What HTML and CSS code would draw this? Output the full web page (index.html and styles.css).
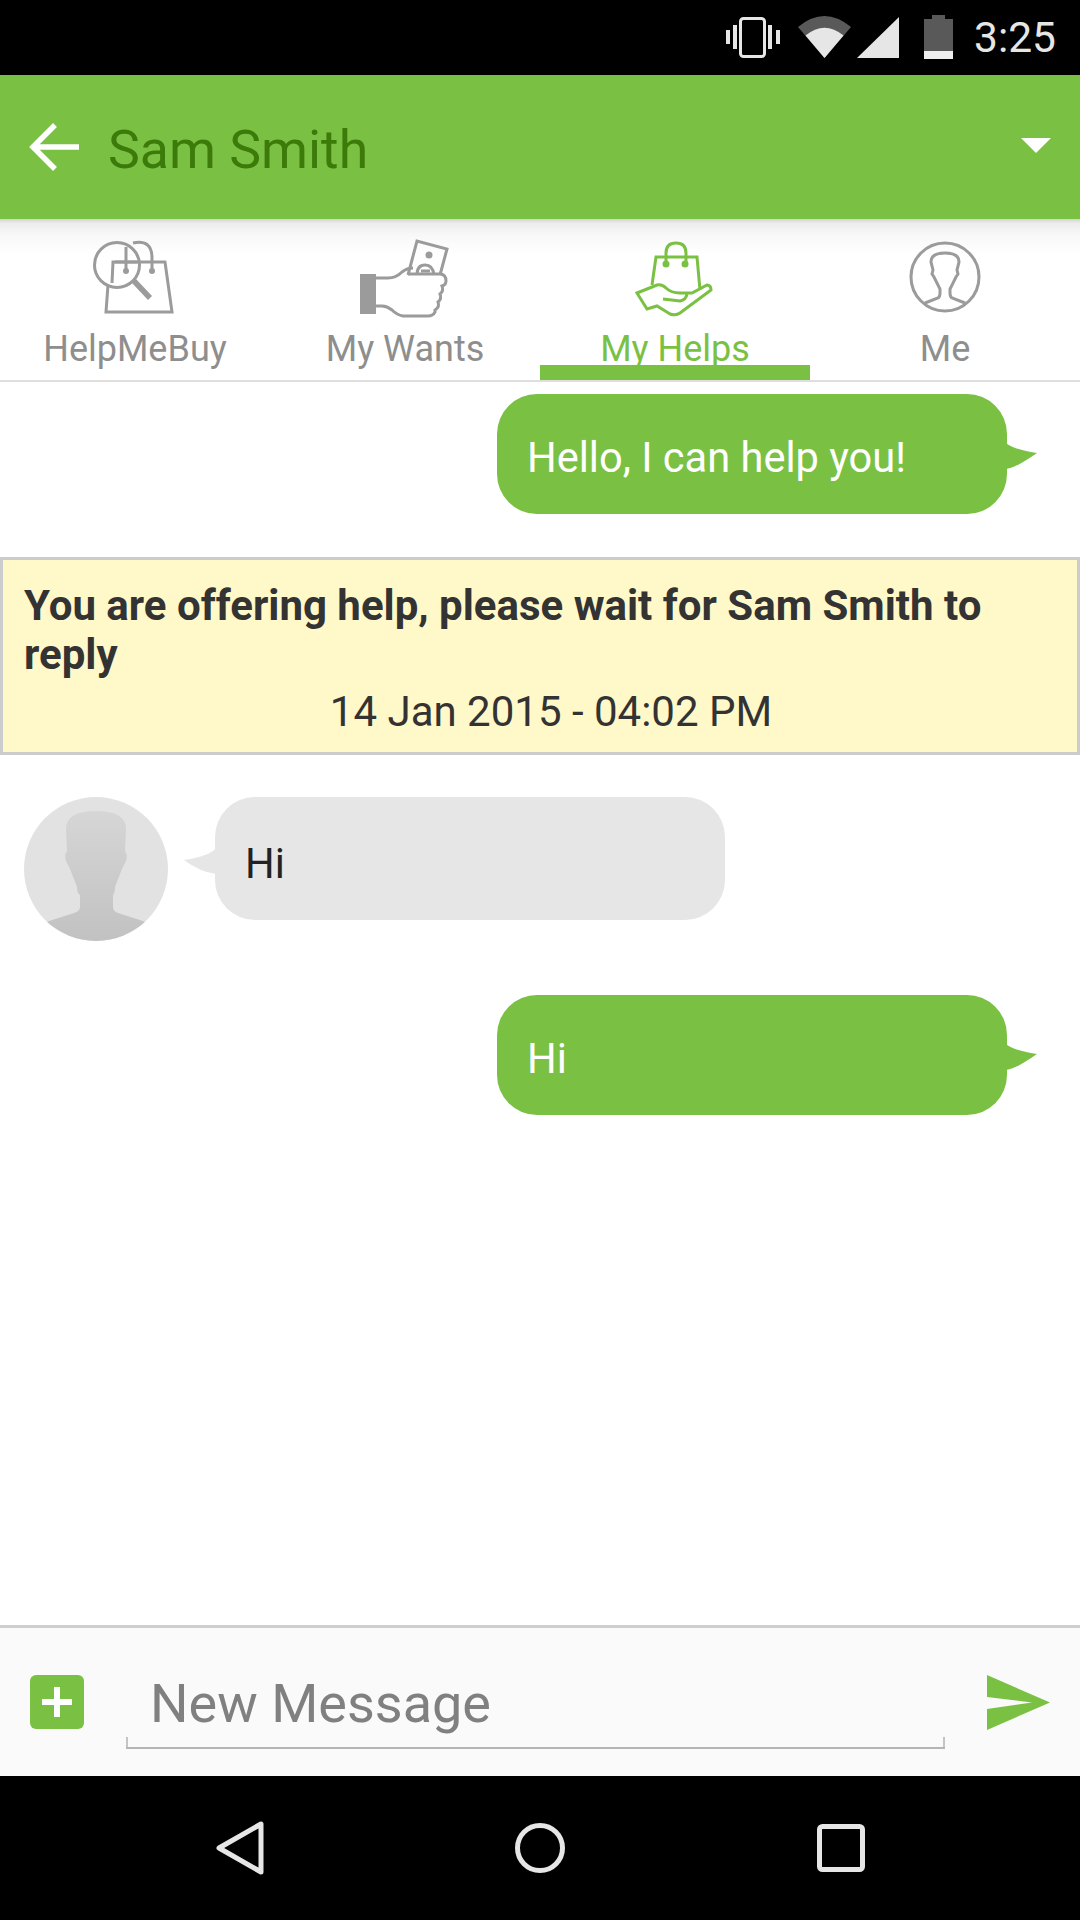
FILE: index.html
```html
<!DOCTYPE html>
<html lang="en">
<head>
<meta charset="utf-8">
<title>Sam Smith</title>
<link rel="stylesheet" href="styles.css">
</head>
<body>
<div class="screen">
  <div class="statusbar">
    <svg class="status-icons" viewBox="715 0 245 75" width="245" height="75">
      <rect class="st-line" x="739.5" y="18.5" width="24" height="38" rx="3"/>
      <rect class="st-fill" x="725" y="30" width="4" height="14"/>
      <rect class="st-fill" x="732" y="25" width="4" height="24"/>
      <rect class="st-fill" x="767" y="25" width="4" height="24"/>
      <rect class="st-fill" x="775" y="30" width="4" height="14"/>
      <path class="st-dark" d="M797 27Q823.500 5 850 27L823.500 58Z"/>
      <path class="st-fill" d="M804.500 35.500Q823.500 20 842.500 35.500L823.500 58Z"/>
      <path class="st-fill" d="M856 58L898 17V58Z"/>
      <path class="st-dark" d="M931 15H944V19H952V51H923V19H931Z"/>
      <rect class="st-light" x="923" y="51" width="29" height="8"/>
    </svg>
    <span class="clock">3:25</span>
  </div>

  <header class="appbar">
    <svg class="back" viewBox="0 0 54 52" width="54" height="52"><path d="M51 26H6M27 4L5 26L27 48"/></svg>
    <h1 class="title">Sam Smith</h1>
    <svg class="caret" viewBox="0 0 30 15" width="30" height="15"><path d="M0 0H30L15 15Z"/></svg>
  </header>

  <nav class="tabs">
    <div class="tab">
      <svg class="tab-icon grey" viewBox="85 239 100 80" width="100" height="80">
        <circle cx="117" cy="265" r="22.500"/>
        <path d="M112 283L113 262H165L172 312H106L108 285"/>
        <path d="M133 243Q152 239 152 258V270"/>
        <path d="M126 247V271M115 262H137"/>
        <circle class="dot" cx="126" cy="271" r="3"/>
        <circle class="dot" cx="152" cy="271" r="3"/>
        <path class="thick" d="M134 281L150 298"/>
      </svg>
      <span class="tab-label">HelpMeBuy</span>
    </div>
    <div class="tab">
      <svg class="tab-icon grey" viewBox="355 239 100 80" width="100" height="80">
        <rect class="dot" x="360" y="274" width="16" height="40"/>
        <path d="M376 278H388Q396 278 402 272Q407 268 413 268"/>
        <path d="M408 274H441Q446 275 446 281Q446 285 442 286Q444 291 440 294Q442 299 438 302Q440 307 435 310V312Q433 316 428 316H403Q397 315 392 310Q387 306 382 306H376"/>
        <path d="M408 275L417 241L447 249L440 275"/>
        <circle class="dot" cx="429" cy="255" r="3.500"/>
        <path d="M417 275Q417 265 425 265Q433 265 434 275"/>
        <path d="M421 271H430"/>
      </svg>
      <span class="tab-label">My Wants</span>
    </div>
    <div class="tab active">
      <svg class="tab-icon green" viewBox="625 239 100 80" width="100" height="80">
        <path d="M652 285L656 257H697L700 290"/>
        <path d="M666 264V253Q666 243 676 243Q686 243 686 253V264"/>
        <circle class="dot" cx="666" cy="264" r="3.500"/>
        <circle class="dot" cx="685" cy="264" r="3.500"/>
        <path d="M637 293L657 285Q662 284 666 288Q671 293 680 293L692 293L707 285Q711 285 711 290L680 313Q676 316 670 314L657 306L647 309Z"/>
        <path d="M663 299L680 301Q686 300 687 294"/>
      </svg>
      <span class="tab-label">My Helps</span>
    </div>
    <div class="tab">
      <svg class="tab-icon grey" viewBox="895 239 100 80" width="100" height="80">
        <circle cx="945" cy="277" r="34"/>
        <path d="M925 303L938 298Q940 297 940 293V289L934 277L932 274L933 270L931 262Q931 253 945 253Q959 253 959 262L957 270L958 274L956 277L950 289V293Q950 297 952 298L965 303"/>
      </svg>
      <span class="tab-label">Me</span>
    </div>
  </nav>

  <main class="messages">
    <div class="bubble out">
      Hello, I can help you!
      <svg class="tail tail-out" viewBox="0 0 31 26" width="31" height="26"><path d="M0 0Q6 6 31 10Q8 26 0 26Z"/></svg>
    </div>
    <section class="notice">
      <p class="notice-text">You are offering help, please wait for Sam Smith to reply</p>
      <p class="notice-date">14 Jan 2015 - 04:02 PM</p>
    </section>
    <div class="incoming">
      <svg class="avatar" viewBox="0 0 144 144" width="144" height="144">
        <defs>
          <linearGradient id="sil" x1="0" y1="0" x2="0" y2="1">
            <stop offset="0" stop-color="#d6d6d6"/>
            <stop offset="1" stop-color="#bfbfbf"/>
          </linearGradient>
          <clipPath id="round"><circle cx="72" cy="72" r="72"/></clipPath>
        </defs>
        <circle cx="72" cy="72" r="72" fill="#e2e2e2"/>
        <path clip-path="url(#round)" fill="url(#sil)" d="M72 14Q42 14 42 32L43 54Q40 58 42 64L46 72L53 90Q53 96 56 98V110Q56 114 50 116L22 125L0 160H144L122 125L94 116Q89 114 89 110V98Q91 96 91 90L98 72L102 64Q104 58 101 54L102 32Q102 14 72 14Z"/>
      </svg>
      <div class="bubble in">
        Hi
        <svg class="tail tail-in" viewBox="0 0 32 26" width="32" height="26"><path d="M32 0Q26 8 0 12Q16 24 32 26Z"/></svg>
      </div>
    </div>
    <div class="bubble out second">
      Hi
      <svg class="tail tail-out" viewBox="0 0 31 26" width="31" height="26"><path d="M0 0Q6 6 31 10Q8 26 0 26Z"/></svg>
    </div>
  </main>

  <footer class="composer">
    <svg class="plus" viewBox="0 0 54 54" width="54" height="54">
      <rect width="54" height="54" rx="6"/>
      <path d="M12 24H24V12H30V24H42V30H30V42H24V30H12Z"/>
    </svg>
    <div class="field">New Message</div>
    <svg class="send" viewBox="0 0 63 55" width="63" height="55"><path d="M0 0L63 27.500L0 55V34L45 27.500L0 22Z"/></svg>
  </footer>

  <div class="navbar">
    <svg viewBox="0 0 54 60" width="54" height="60" class="nav-icon"><path d="M47 6V54L5 30Z"/></svg>
    <svg viewBox="0 0 56 56" width="56" height="56" class="nav-icon"><circle cx="28" cy="28" r="22.500"/></svg>
    <svg viewBox="0 0 52 52" width="52" height="52" class="nav-icon"><rect x="4.500" y="4.500" width="43" height="43" rx="3"/></svg>
  </div>
</div>
</body>
</html>
```
FILE: styles.css
```css
* { box-sizing: border-box; }
html, body { margin: 0; padding: 0; }
body { width: 1080px; height: 1920px; overflow: hidden; background: #fff; font-family: Roboto, "Liberation Sans", sans-serif; }
.screen { width: 1080px; height: 1920px; display: flex; flex-direction: column; }

.statusbar { height: 75px; flex: none; background: #000; display: flex; align-items: center; justify-content: flex-end; padding-right: 23px; }
.status-icons { display: block; flex: none; margin-right: 13px; }
.clock { color: #e6e6e6; font-size: 42.5px; line-height: 75px; width: 83px; }
.st-line { fill: none; stroke: #e6e6e6; stroke-width: 3; }
.st-fill { fill: #e6e6e6; }
.st-dark { fill: #595959; }
.st-light { fill: #efefef; }

.appbar { height: 144px; flex: none; background: #7ac143; display: flex; align-items: center; padding: 0 29px 0 28px; }
.back { flex: none; fill: none; stroke: #fff; stroke-width: 5.5; margin-right: 26px; }
.title { margin: 4px 0 0; flex: 1; font-size: 53.6px; font-weight: 400; color: #3c7a0a; }
.caret { flex: none; fill: #fff; margin-bottom: 3px; }

.tabs { height: 163px; flex: none; display: flex; border-bottom: 2px solid #dedede; background: linear-gradient(#d2d2d2 0, #ececec 4px, #f8f8f8 16px, #fff 36px); }
.tab { position: relative; width: 270px; display: flex; flex-direction: column; align-items: center; padding-top: 20px; }
.tab-icon { display: block; flex: none; fill: none; stroke-width: 3; }
.tab-icon.grey { stroke: #9b9b9b; }
.tab-icon.grey .dot { fill: #9b9b9b; stroke: none; }
.tab-icon.green { stroke: #7ac143; }
.tab-icon.green .dot { fill: #7ac143; stroke: none; }
.thick { stroke-width: 5.5; }
.tab-label { font-size: 36px; line-height: 42px; margin-top: 9px; color: #8e8e8e; }
.tab.active .tab-label { color: #7ac143; }
.tab.active::after { content: ""; position: absolute; left: 0; right: 0; bottom: 0; height: 15px; background: #7ac143; }

.messages { flex: 1; display: flex; flex-direction: column; align-items: stretch; padding-top: 12px; }
.bubble { position: relative; width: 510px; font-size: 41.6px; display: flex; align-items: center; padding: 6px 0 0 30px; border-radius: 40px; }
.bubble.out { align-self: flex-end; margin-right: 73px; height: 120px; background: #7ac143; color: #fff; }
.bubble.out.second { margin-top: 54px; }
.bubble.in { height: 123px; padding-top: 10px; background: #e6e6e6; color: #222; margin-left: 47px; }
.tail { position: absolute; top: 50%; }
.tail-out { left: 100%; margin-top: -11px; fill: #7ac143; margin-left: -1px; }
.tail-in { right: 100%; margin-top: -11px; fill: #e6e6e6; margin-right: -1px; }

.notice { margin-top: 43px; height: 198px; background: #fff8c8; border: 3px solid #cccccc; padding: 21px 21px 0; color: #333; }
.notice-text { margin: 0; font-size: 42px; line-height: 49px; font-weight: 700; }
.notice-date { margin: 8px 0 0; padding-left: 22px; font-size: 42px; line-height: 49px; text-align: center; }

.incoming { margin-top: 42px; padding-left: 24px; display: flex; align-items: flex-start; }
.avatar { display: block; flex: none; }

.composer { height: 151px; flex: none; display: flex; align-items: center; background: #fafafa; border-top: 3px solid #cfcfcf; padding: 0 30px; }
.plus { flex: none; fill: #7ac143; }
.plus path { fill: #fff; }
.field { width: 819px; height: 70px; margin: 24px 0 0 42px; padding-left: 24px; font-size: 54px; line-height: 49px; color: #808080; background:
  linear-gradient(#b5b5b5, #b5b5b5) left bottom / 100% 2px no-repeat,
  linear-gradient(#c4c4c4, #c4c4c4) left bottom / 2px 12px no-repeat,
  linear-gradient(#c4c4c4, #c4c4c4) right bottom / 2px 12px no-repeat; }
.send { flex: none; fill: #7ac143; margin-left: 42px; }

.navbar { height: 144px; flex: none; background: #000; display: flex; align-items: center; padding-left: 214px; }
.nav-icon { flex: none; fill: none; stroke: #e6e6e6; stroke-width: 5; stroke-linejoin: round; }
.nav-icon:nth-child(2) { margin-left: 244px; }
.nav-icon:nth-child(3) { margin-left: 247px; }
```
